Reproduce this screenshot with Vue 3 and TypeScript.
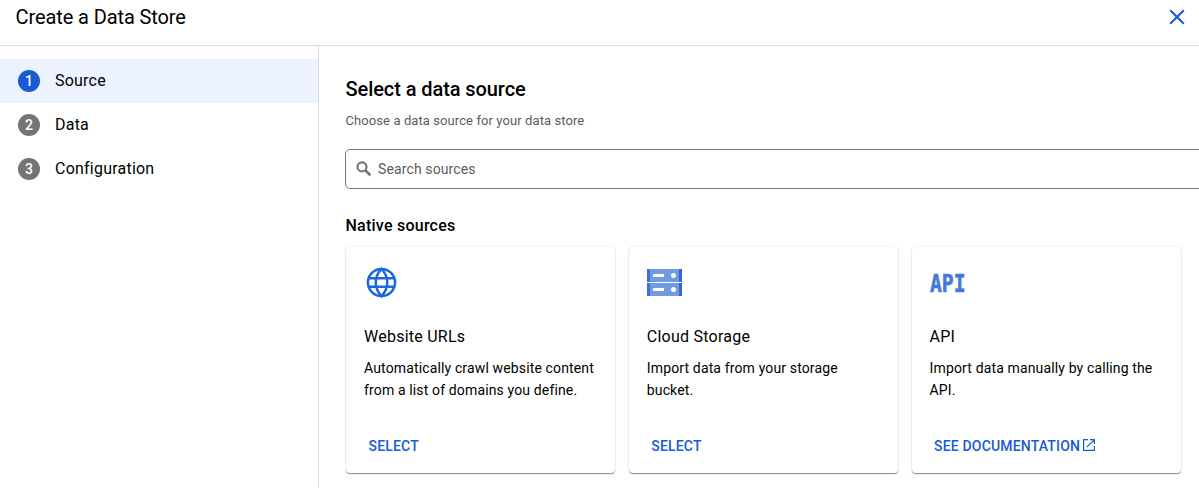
<script setup lang="ts">
interface Step {
  id: number
  label: string
}

interface Source {
  icon: 'globe' | 'storage' | 'api'
  title: string
  description: string
  action: string
  external?: boolean
}

const activeStep = 1

const steps: Step[] = [
  { id: 1, label: 'Source' },
  { id: 2, label: 'Data' },
  { id: 3, label: 'Configuration' },
]

const sources: Source[] = [
  {
    icon: 'globe',
    title: 'Website URLs',
    description: 'Automatically crawl website content from a list of domains you define.',
    action: 'Select',
  },
  {
    icon: 'storage',
    title: 'Cloud Storage',
    description: 'Import data from your storage bucket.',
    action: 'Select',
  },
  {
    icon: 'api',
    title: 'API',
    description: 'Import data manually by calling the API.',
    action: 'See documentation',
    external: true,
  },
]
</script>

<template>
  <div class="page">
    <header class="header">
      <h1 class="header-title">Create a Data Store</h1>
      <button class="close" type="button" aria-label="Close">
        <svg width="16" height="16" viewBox="0 0 16 16">
          <path d="M1.2 1.2 14.8 14.8M14.8 1.2 1.2 14.8" fill="none" stroke="currentColor" stroke-width="2.1" />
        </svg>
      </button>
    </header>

    <div class="body">
      <nav class="steps">
        <div v-for="step in steps" :key="step.id" class="step" :class="{ active: step.id === activeStep }">
          <span class="badge">{{ step.id }}</span>
          <span class="step-label">{{ step.label }}</span>
        </div>
      </nav>

      <main class="content">
        <h2 class="heading">Select a data source</h2>
        <p class="subheading">Choose a data source for your data store</p>

        <label class="search">
          <svg class="search-icon" width="20" height="20" viewBox="0 0 20 20">
            <circle cx="8" cy="7.9" r="4.5" fill="none" stroke="currentColor" stroke-width="2.1" />
            <path d="M11.2 11.2 16.4 16.3" fill="none" stroke="currentColor" stroke-width="2.6" />
          </svg>
          <input class="search-input" type="text" placeholder="Search sources" />
        </label>

        <h3 class="section">Native sources</h3>
        <div class="cards">
          <article v-for="source in sources" :key="source.title" class="card">
            <svg v-if="source.icon === 'globe'" class="icon" width="36" height="36" viewBox="0 0 36 36">
              <g fill="none" stroke="#1a68e0" stroke-width="2.5">
                <circle cx="17.5" cy="17.5" r="13.6" />
                <path d="M17.5 3.9C9.8 12 9.8 23 17.5 31.1C25.2 23 25.2 12 17.5 3.9ZM4.9 13.3H30.1M4.9 21.8H30.1" />
              </g>
            </svg>
            <svg v-else-if="source.icon === 'storage'" class="icon" width="36" height="36" viewBox="0 0 36 36">
              <g v-for="y in [4, 18]" :key="y">
                <rect x="0" :y="y" width="35" height="13" fill="#729ae2" />
                <rect x="0" :y="y" width="3" height="13" fill="#3f6fd7" />
                <rect x="32" :y="y" width="3" height="13" fill="#3367d6" />
                <rect x="6" :y="y + 5" width="11" height="3" fill="#fff" />
                <circle cx="26.5" :cy="y + 6.5" r="2.5" fill="#fff" />
              </g>
            </svg>
            <svg v-else class="icon" width="36" height="36" viewBox="0 0 36 36">
              <text class="api-mark" x="0" y="26.6" textLength="35.5" lengthAdjust="spacingAndGlyphs">API</text>
            </svg>

            <h4 class="card-title">{{ source.title }}</h4>
            <p class="card-text">{{ source.description }}</p>
            <button class="action" type="button">
              {{ source.action }}
              <svg v-if="source.external" class="external" width="12" height="12" viewBox="0 0 12 12">
                <path
                  d="M5 .6H.6V11.4H11.4V7M7 .6H11.4V5M11.2.8 3.8 8.2"
                  fill="none"
                  stroke="currentColor"
                  stroke-width="1.2"
                />
              </svg>
            </button>
          </article>
        </div>
      </main>
    </div>
  </div>
</template>

<style>
body {
  margin: 0;
  overflow: hidden;
  background: #fff;
}
</style>

<style scoped>
.page {
  box-sizing: border-box;
  display: flex;
  flex-direction: column;
  width: 1199px;
  height: 488px;
  overflow: hidden;
  background: #fff;
  color: #000;
  font-family: Roboto, "Liberation Sans", sans-serif;
}

h1,
h2,
h3,
h4,
p {
  margin: 0;
}

.header {
  box-sizing: border-box;
  display: flex;
  flex: none;
  justify-content: space-between;
  height: 46px;
  padding: 5px 14px 0 15.5px;
  border-bottom: 1px solid #dadce0;
}

.header-title {
  font-size: 20px;
  font-weight: 400;
  letter-spacing: -0.1px;
  line-height: 24px;
}

.close {
  display: flex;
  align-items: center;
  height: 24px;
  padding: 0;
  border: 0;
  background: none;
  color: #185bd2;
}

.body {
  display: flex;
  flex: 1;
  min-height: 0;
}

.steps {
  flex: none;
  width: 318px;
  padding-top: 13px;
  border-right: 1px solid #dadce0;
}

.step {
  display: flex;
  align-items: center;
  gap: 15px;
  height: 44px;
  padding-left: 18px;
}

.step.active {
  background: #ecf3fe;
}

.badge {
  width: 22px;
  height: 22px;
  border-radius: 50%;
  background: #757575;
  color: #fff;
  font-size: 14px;
  font-weight: 500;
  line-height: 23px;
  text-align: center;
}

.active .badge {
  background: #185bd2;
}

.step-label {
  font-size: 16px;
  letter-spacing: 0.22px;
  line-height: 24px;
}

.content {
  flex: none;
  width: 920px;
  padding: 31px 0 0 26.5px;
}

.heading {
  font-size: 20px;
  font-weight: 500;
  letter-spacing: -0.08px;
  line-height: 24px;
}

.subheading {
  margin-top: 10px;
  color: #5c5c5c;
  font-size: 13px;
  letter-spacing: 0.09px;
  line-height: 20px;
}

.search {
  box-sizing: border-box;
  display: flex;
  align-items: center;
  height: 40px;
  margin: 18px 0 0 -0.5px;
  padding-left: 8px;
  border: 1px solid #747a85;
  border-radius: 5px;
}

.search-icon {
  flex: none;
  color: #757575;
}

.search-input {
  flex: 1;
  margin-left: 4px;
  padding: 0;
  border: 0;
  outline: 0;
  font: 400 14px/20px Roboto, "Liberation Sans", sans-serif;
  letter-spacing: 0.12px;
}

.search-input::placeholder {
  color: #5c5c5c;
}

.section {
  margin-top: 25px;
  font-size: 16px;
  font-weight: 500;
  letter-spacing: 0.24px;
  line-height: 24px;
}

.cards {
  display: flex;
  gap: 13.8px;
  margin: 9px 0 0 0.5px;
}

.card {
  box-sizing: border-box;
  display: flex;
  flex: none;
  flex-direction: column;
  align-items: flex-start;
  width: 269px;
  height: 226px;
  padding: 18px 18px 0;
  border-radius: 4px;
  background: #fff;
  box-shadow:
    0 1px 1px rgba(0, 0, 0, 0.38),
    0 0.5px 2px rgba(0, 0, 0, 0.15);
}

.icon {
  display: block;
  overflow: visible;
}

.api-mark {
  fill: #4677d9;
  stroke: #4677d9;
  stroke-width: 0.6px;
  font: 700 24px/1 "DejaVu Sans Mono", monospace;
}

.card-title {
  margin-top: 24px;
  font-size: 16px;
  font-weight: 400;
  letter-spacing: 0.24px;
  line-height: 24px;
}

.card-text {
  margin-top: 8px;
  font-size: 14px;
  letter-spacing: 0.14px;
  line-height: 22px;
}

.action {
  display: flex;
  align-items: center;
  gap: 3.2px;
  height: 24px;
  margin: auto 0 15px;
  padding: 0 4.5px;
  border: 0;
  background: none;
  color: #185bd2;
  font: 500 14px/24px Roboto, "Liberation Sans", sans-serif;
  letter-spacing: 0.17px;
  text-transform: uppercase;
}

.external {
  margin-top: -2px;
}
</style>
